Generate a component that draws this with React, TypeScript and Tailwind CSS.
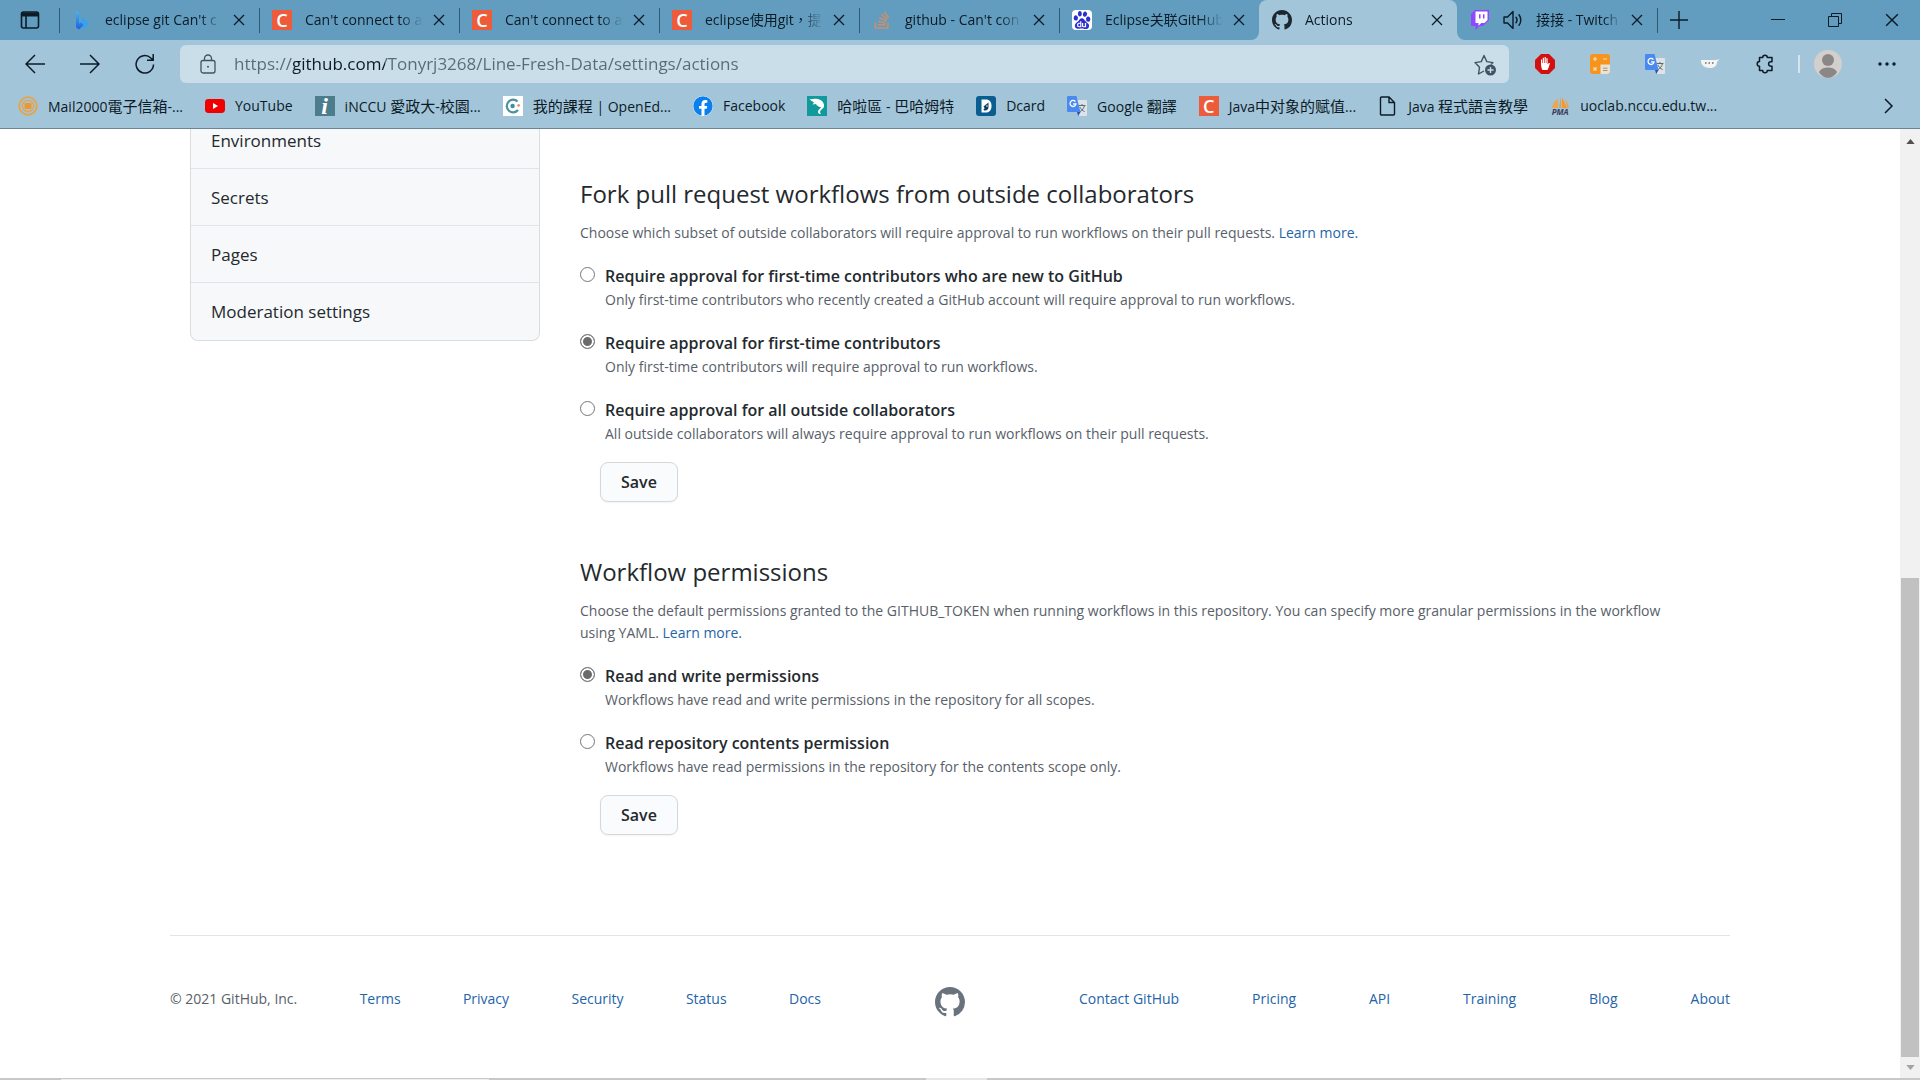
import { useState } from 'react';
import type { ReactNode } from 'react';
import { FaFacebook, FaStackOverflow } from 'react-icons/fa';
import { SiBaidu } from 'react-icons/si';

const GitHubMark = ({ className }: { className?: string }) => (
  <svg viewBox="0 0 16 16" fill="currentColor" className={className}>
    <path d="M8 0C3.58 0 0 3.58 0 8c0 3.54 2.29 6.53 5.47 7.59.4.07.55-.17.55-.38 0-.19-.01-.82-.01-1.49-2.01.37-2.53-.49-2.69-.94-.09-.23-.48-.94-.82-1.13-.28-.15-.68-.52-.01-.53.63-.01 1.08.58 1.23.82.72 1.21 1.87.87 2.33.66.07-.52.28-.87.51-1.07-1.78-.2-3.64-.89-3.64-3.95 0-.87.31-1.59.82-2.15-.08-.2-.36-1.02.08-2.12 0 0 .67-.21 2.2.82.64-.18 1.32-.27 2-.27.68 0 1.36.09 2 .27 1.53-1.04 2.2-.82 2.2-.82.44 1.1.16 1.92.08 2.12.51.56.82 1.27.82 2.15 0 3.07-1.87 3.75-3.65 3.95.29.25.54.73.54 1.48 0 1.07-.01 1.93-.01 2.2 0 .21.15.46.55.38A8.013 8.013 0 0016 8c0-4.42-3.58-8-8-8z" />
  </svg>
);

const BingIcon = () => (
  <svg viewBox="0 0 20 20" className="size-5">
    <defs>
      <linearGradient id="bing" x1="0" y1="0" x2="0" y2="1">
        <stop offset="0" stopColor="#46b4f5" />
        <stop offset="1" stopColor="#1b62dd" />
      </linearGradient>
    </defs>
    <path d="M4 1l3 1.6v11L9.500 12.400l2.500 3-5 4L4 17.500z" fill="url(#bing)" />
    <path d="M9 7l5.600 3.600c1.800 1.400 1.800 4 .2 5.600L7 19.500 12 14.600l-2-1.600z" fill="#35a2f3" />
  </svg>
);

const CsdnIcon = () => (
  <span className="flex size-5 items-center justify-center bg-[#ec5b3a] text-lg leading-5 font-semibold text-white">C</span>
);

const BaiduIcon = () => (
  <span className="flex size-5 items-center justify-center rounded-sm bg-white">
    <SiBaidu className="size-[18px] text-[#2a2fd0]" />
  </span>
);

const TwitchIcon = () => (
  <svg viewBox="0 0 20 20" className="size-5">
    <path d="M5 0L1 4v12h4.500v4l4-4h3.500l6-6V0z" fill="#9147ff" />
    <path d="M5.500 1.500h12V10l-3 3h-3.200l-2.800 2.800V13h-3z" fill="#fff" />
    <path d="M9 4.200h1.500v4.300H9zM13 4.200h1.500v4.300H13z" fill="#9147ff" />
  </svg>
);

const SpeakerIcon = () => (
  <svg viewBox="0 0 20 20" className="size-5" fill="none" stroke="currentColor" strokeWidth="1.4">
    <path d="M1 7h3.600L10 1.600v16.800L4.600 13H1z" strokeLinejoin="round" />
    <path d="M13 7.200c1.200 1.600 1.200 4 0 5.600M16 4.800c2.400 3 2.400 7.400 0 10.400" strokeLinecap="round" />
  </svg>
);

const CloseIcon = ({ className = 'size-3' }: { className?: string }) => (
  <svg viewBox="0 0 12 12" className={className} stroke="currentColor" strokeWidth="1.3">
    <path d="M1 1l10 10M11 1L1 11" />
  </svg>
);

const TranslateIcon = () => (
  <svg viewBox="0 0 20 20" className="size-5">
    <path d="M8 4h11a1 1 0 011 1v14a1 1 0 01-1 1h-7z" fill="#dfe3e6" />
    <path d="M11.500 9.500h7M15 8v1.500M17.500 9.500c-.6 2.800-2.400 5-5 6.500M12.800 11c1 2 2.600 3.600 4.800 4.600" stroke="#5a6b78" fill="none" />
    <path d="M1 0h8.500l4 16H1a1 1 0 01-1-1V1a1 1 0 011-1z" fill="#4a8af0" />
    <path d="M10 16h3.600l-2.400 4z" fill="#2c50b8" />
    <path d="M8.400 5.600A3 3 0 109 8H6.200" stroke="#fff" strokeWidth="1.3" fill="none" />
  </svg>
);

const Mail2000Icon = () => (
  <svg viewBox="0 0 20 20" className="size-5" fill="none" stroke="#e9a345">
    <circle cx="10" cy="10" r="8.800" strokeWidth="1.800" />
    <circle cx="10" cy="10" r="5.600" strokeWidth="1.400" />
    <rect x="6.500" y="7" width="7" height="6" rx="1" fill="#f0962e" stroke="none" />
  </svg>
);

const YouTubeIcon = () => (
  <svg viewBox="0 0 20 20" className="size-5">
    <rect y="3" width="20" height="14" rx="3.400" fill="#f00000" />
    <path d="M8 7l5 3-5 3z" fill="#fff" />
  </svg>
);

const InccuIcon = () => (
  <span className="flex size-5 items-center justify-center bg-[#4c7d8c] font-['Liberation_Serif',serif] text-2xl leading-5 font-bold text-white italic">i</span>
);

const OpenEduIcon = () => (
  <svg viewBox="0 0 20 20" className="size-5">
    <rect width="20" height="20" fill="#fff" />
    <path d="M14.600 5.600a6.300 6.300 0 10.400 8.400" fill="none" stroke="#4b93a3" strokeWidth="2.200" />
    <circle cx="9.600" cy="10" r="2.200" fill="#3f8fa0" />
    <circle cx="15.600" cy="9.400" r="1.300" fill="#ea8a6a" />
  </svg>
);

const BahamutIcon = () => (
  <svg viewBox="0 0 20 20" className="size-5">
    <rect width="20" height="20" fill="#109a9b" />
    <path d="M2.500 3.500C6 2.500 10 2 13.500 4c2.600 1.600 4 4 3.500 6.500-.4 1.800-2 2.300-3 3.500-1 1.300-1.500 3 .2 4-2.200.3-3.600-1-3.200-2.800.4-1.800 2.800-2.700 3-4.400C12.500 11.500 10 10 9 8L5.500 8.500 7 6.500z" fill="#fff" />
  </svg>
);

const DcardIcon = () => (
  <svg viewBox="0 0 20 20" className="size-5">
    <rect width="20" height="20" rx="3" fill="#0a5d8f" />
    <path d="M5.500 3.500h4.500c3.600 0 5.500 2.500 5.500 6.500s-2 6.500-5.500 6.500H5.500z" fill="#fff" />
    <path d="M7.500 10.500l5-4v4.500c0 2-1.500 3.500-3.200 3.500-1 0-1.800-.6-1.800-1.600 1.300.3 1.500-1 0-2.400z" fill="#0a3f63" />
    <circle cx="11" cy="10" r=".8" fill="#fff" />
  </svg>
);

const PageIcon = () => (
  <svg viewBox="0 0 20 20" className="size-5" fill="none" stroke="currentColor" strokeWidth="1.400">
    <path d="M3.500 1h7.500l5.500 5.500V18a1 1 0 01-1 1h-12a1 1 0 01-1-1V2a1 1 0 011-1zM11 1v5.500h5.500" />
  </svg>
);

const PmaIcon = () => (
  <span className="flex size-5 flex-col items-center">
    <svg viewBox="0 0 20 12" className="h-3 w-5 shrink-0">
      <path d="M9 12L11 0v12zM12 12V1l5 11z" fill="#f39a2d" />
      <path d="M2 12c1-5 3-8 6-9v9zM15 3c2 2.500 3.500 5 4 9H17z" fill="#eaa650" />
    </svg>
    <span className="text-[8px] leading-2 font-bold text-[#3b3b5c] italic">PMA</span>
  </span>
);

type Tab = { title: string; icon: ReactNode; sound?: boolean };

const tabsBefore: Tab[] = [
  { title: "eclipse git Can't c", icon: <BingIcon /> },
  { title: "Can't connect to a", icon: <CsdnIcon /> },
  { title: "Can't connect to a", icon: <CsdnIcon /> },
  { title: 'eclipse使用git，提', icon: <CsdnIcon /> },
  { title: "github - Can't con", icon: <FaStackOverflow className="size-5 text-[#c79070]" /> },
  { title: 'Eclipse关联GitHub', icon: <BaiduIcon /> },
];

const bookmarks = [
  { title: 'Mail2000電子信箱-...', icon: <Mail2000Icon /> },
  { title: 'YouTube', icon: <YouTubeIcon /> },
  { title: 'iNCCU 愛政大-校園...', icon: <InccuIcon /> },
  { title: '我的課程 | OpenEd...', icon: <OpenEduIcon /> },
  { title: 'Facebook', icon: <FaFacebook className="size-5 rounded-full bg-white text-[#0a80ee]" /> },
  { title: '哈啦區 - 巴哈姆特', icon: <BahamutIcon /> },
  { title: 'Dcard', icon: <DcardIcon /> },
  { title: 'Google 翻譯', icon: <TranslateIcon /> },
  { title: 'Java中对象的赋值...', icon: <CsdnIcon /> },
  { title: 'Java 程式語言教學', icon: <PageIcon /> },
  { title: 'uoclab.nccu.edu.tw...', icon: <PmaIcon /> },
];

const approvalOptions = [
  {
    id: 'new',
    label: 'Require approval for first-time contributors who are new to GitHub',
    note: 'Only first-time contributors who recently created a GitHub account will require approval to run workflows.',
  },
  {
    id: 'first',
    label: 'Require approval for first-time contributors',
    note: 'Only first-time contributors will require approval to run workflows.',
  },
  {
    id: 'all',
    label: 'Require approval for all outside collaborators',
    note: 'All outside collaborators will always require approval to run workflows on their pull requests.',
  },
];

const permissionOptions = [
  {
    id: 'write',
    label: 'Read and write permissions',
    note: 'Workflows have read and write permissions in the repository for all scopes.',
  },
  {
    id: 'read',
    label: 'Read repository contents permission',
    note: 'Workflows have read permissions in the repository for the contents scope only.',
  },
];

// Chinese glyphs are set one size up from the Latin text beside them
function MixedText({ text }: { text: string }) {
  return (
    <span className="whitespace-pre">
      {text.split(/([\u4e00-\u9fff]+)/).map((part, i) =>
        i % 2 ? <span key={i} className="text-[15px] leading-5">{part}</span> : part
      )}
    </span>
  );
}

function BrowserTab({ tab, active, divider }: { tab: Tab; active?: boolean; divider?: boolean }) {
  return (
    <div className={active ? 'flex h-10 w-[198px] items-center rounded-t-lg bg-[#a3c5da]' : 'flex h-10 w-[200px] items-center'}>
      <span className={divider ? 'h-[25px] w-px bg-[#2f5a74]' : 'w-px'} />
      <button className="ml-3 flex min-w-0 flex-1 items-center gap-[13px] text-left">
        <span className="shrink-0">{tab.icon}</span>
        {tab.sound && <span className="shrink-0"><SpeakerIcon /></span>}
        <span className="flex-1 overflow-hidden mask-r-from-80% mask-r-to-100% whitespace-nowrap">{tab.title}</span>
      </button>
      <button aria-label="Close tab" className="mr-3.5 ml-2.5">
        <CloseIcon />
      </button>
    </div>
  );
}

function TabStrip() {
  return (
    <div className="flex h-10">
      <div className="flex items-center rounded-br-lg bg-[#629dc0]">
        <button aria-label="Tab actions" className="flex w-[59px] justify-center">
          <svg viewBox="0 0 20 20" className="size-5" fill="none" stroke="currentColor" strokeWidth="1.6">
            <rect x="1.500" y="2" width="17" height="16" rx="2" />
            <path d="M1.500 4.500h17" strokeWidth="4" />
            <path d="M6 5v13" />
          </svg>
        </button>
        {tabsBefore.map((tab, i) => (
          <BrowserTab key={i} tab={tab} divider />
        ))}
      </div>
      <div className="bg-[linear-gradient(#629dc0_50%,#a3c5da_50%)]">
        <BrowserTab tab={{ title: 'Actions', icon: <GitHubMark className="size-5 text-[#1c2830]" /> }} active />
      </div>
      <div className="flex flex-1 items-center rounded-bl-lg bg-[#629dc0]">
        <BrowserTab tab={{ title: '接接 - Twitch', icon: <TwitchIcon />, sound: true }} />
        <span className="h-[25px] w-px bg-[#2f5a74]" />
        <button aria-label="New tab" className="px-3">
          <svg viewBox="0 0 18 18" className="size-[18px]" stroke="currentColor" strokeWidth="1.400">
            <path d="M9 0v18M0 9h18" />
          </svg>
        </button>
        <div className="ml-auto flex">
          <button aria-label="Minimize" className="flex w-[57px] justify-center">
            <svg viewBox="0 0 14 14" className="size-3.5" stroke="currentColor"><path d="M0 6.500h14" /></svg>
          </button>
          <button aria-label="Restore" className="flex w-[57px] justify-center">
            <svg viewBox="0 0 14 14" className="size-3.5" stroke="currentColor" fill="none">
              <path d="M.5 3.500h10v10H.5zM3.500 3.500v-3h10v10h-3" />
            </svg>
          </button>
          <button aria-label="Close" className="flex w-[57px] justify-center">
            <CloseIcon className="size-3.5" />
          </button>
        </div>
      </div>
    </div>
  );
}

function Toolbar() {
  return (
    <div className="flex h-12 items-center pr-6">
      <button aria-label="Back" className="flex w-[55px] justify-end pr-2.5">
        <svg viewBox="0 0 20 20" className="size-5 shrink-0" fill="none" stroke="currentColor" strokeWidth="1.500"><path d="M20 10H1M10 1L1 10l9 9" /></svg>
      </button>
      <button aria-label="Forward" className="flex w-[55px] justify-end pr-2.5">
        <svg viewBox="0 0 20 20" className="size-5 shrink-0" fill="none" stroke="currentColor" strokeWidth="1.500"><path d="M0 10h19M10 1l9 9-9 9" /></svg>
      </button>
      <button aria-label="Refresh" className="flex w-[70px] justify-center">
        <svg viewBox="0 0 20 20" className="size-5" fill="none" stroke="currentColor" strokeWidth="1.500">
          <path d="M18.500 10.500A8.700 8.700 0 1115.800 4L18 6M18.200 0v6.300H12" />
        </svg>
      </button>
      <div className="flex h-[38px] flex-1 items-center gap-4 rounded-md bg-[#c9dee9] pr-3 pl-5 text-[#3f5563]">
        <svg viewBox="0 0 16 20" className="h-5 w-4 shrink-0" fill="none" stroke="currentColor" strokeWidth="1.300">
          <rect x="1" y="6.500" width="14" height="12.500" rx="2" />
          <path d="M4.500 6.500V4.500a3.500 3.500 0 017 0v2" />
          <circle cx="8" cy="12.700" r="1" fill="currentColor" stroke="none" />
        </svg>
        {/* the gradient stops darken the host name only */}
        <input
          aria-label="Address"
          defaultValue="https://github.com/Tonyrj3268/Line-Fresh-Data/settings/actions"
          className="flex-1 bg-[linear-gradient(90deg,#566a77_61px,#0b1a24_61px,#0b1a24_153px,#566a77_153px)] bg-clip-text pl-0.5 text-[17px] text-transparent outline-none"
        />
        <button aria-label="Add to favorites">
          <svg viewBox="0 0 24 24" className="size-6" fill="none" stroke="currentColor" strokeWidth="1.400">
            <path d="M11 19l-5.500 3 1-6.700L2 10.600l6.300-1L11 3.500l2.800 6.100 6.200 1-2 2" strokeLinejoin="round" />
            <circle cx="17.500" cy="18" r="5.500" fill="#3f5563" stroke="none" />
            <path d="M17.500 15v6M14.500 18h6" stroke="#c9dee9" />
          </svg>
        </button>
      </div>
      <div className="ml-2 flex items-center">
        <button aria-label="Ad blocker" className="flex w-[55px] justify-center">
          <svg viewBox="0 0 20 20" className="size-5">
            <path d="M6 0h8l6 6v8l-6 6H6l-6-6V6z" fill="#d2100f" />
            <path d="M6 9V5.500h1.200V9h.6V3.800H9V9h.6V3h1.200v6h.6V4.200h1.200v6.300l1.200-1.500h1.200c-.6 2-1.400 5.500-2.600 7H7.600C6.400 14.500 6 12 6 9z" fill="#fff" />
          </svg>
        </button>
        <button aria-label="Calculator" className="flex w-[55px] justify-center">
          <svg viewBox="0 0 20 20" className="size-5">
            <rect width="20" height="20" rx="3" fill="#f7941e" />
            <path d="M10.500 10.500H20V17a3 3 0 01-3 3h-6.500z" fill="#e6e2dc" />
            <path d="M3 5h4M5 3v4M13 5h4M3.500 13.500l3 3M6.500 13.500l-3 3" stroke="#ffe3b8" strokeWidth="1.200" />
            <path d="M13 14.200h4.500M13 16.500h4.500" stroke="#c98c45" />
          </svg>
        </button>
        <button aria-label="Translate" className="flex w-[55px] justify-center"><TranslateIcon /></button>
        <button aria-label="Extension" className="flex w-[55px] justify-center">
          <svg viewBox="0 0 20 20" className="size-5">
            <path d="M1 6h15l3.500-1-2.500 3c0 4-3 6-7.500 6S.5 11 1 6z" fill="#f4f4f2" />
            <path d="M5 9h1.500M8.500 9H10M12 9h1.500" stroke="#6b6b6b" strokeWidth="1.400" />
          </svg>
        </button>
        <button aria-label="Extensions" className="flex w-[55px] justify-center">
          <svg viewBox="0 0 20 20" className="size-5" fill="none" stroke="currentColor" strokeWidth="1.500" strokeLinejoin="round">
            <path d="M4.500 3.500h3.200a2.300 2.300 0 014.600 0h4.700v4.300h-1.200a2.200 2.200 0 000 4.400H17v4.300h-4.700a2.300 2.300 0 01-4.600 0H4.500v-4.300a2.300 2.300 0 010-4.600z" />
          </svg>
        </button>
        <span className="mx-1.5 h-[18px] w-0.5 bg-[#d5e4ee]" />
        <button aria-label="Profile" className="ml-2">
          <svg viewBox="0 0 28 28" className="size-7">
            <circle cx="14" cy="14" r="14" fill="#d3cfcc" />
            <circle cx="14" cy="10" r="6" fill="#8b8785" />
            <path d="M5 22c1.500-3.200 5-4.500 9-4.500s7.500 1.300 9 4.500c-2 3.500-5.400 5.800-9 5.800S7 25.500 5 22z" fill="#8b8785" />
          </svg>
        </button>
        <button aria-label="Settings and more" className="ml-9">
          <svg viewBox="0 0 18 4" className="h-1 w-[18px]" fill="currentColor">
            <circle cx="2" cy="2" r="1.700" /><circle cx="9" cy="2" r="1.700" /><circle cx="16" cy="2" r="1.700" />
          </svg>
        </button>
      </div>
    </div>
  );
}

function BookmarksBar() {
  return (
    <nav className="flex h-[41px] items-center border-b border-[#6b8597] pr-[26px] pb-1 pl-[18px]">
      <ul className="flex flex-1 items-center gap-[22px]">
        {bookmarks.map((b) => (
          <li key={b.title}>
            <a href="#" className="flex items-center gap-2.5">
              {b.icon}
              <MixedText text={b.title} />
            </a>
          </li>
        ))}
      </ul>
      <button aria-label="More favorites">
        <svg viewBox="0 0 10 16" className="h-4 w-2.5" fill="none" stroke="currentColor" strokeWidth="1.500"><path d="M1 1l7 7-7 7" /></svg>
      </button>
    </nav>
  );
}

type Option = { id: string; label: string; note: string };

function RadioList({ name, options, initial }: { name: string; options: Option[]; initial: string }) {
  const [value, setValue] = useState(initial);

  return (
    <form onSubmit={(e) => e.preventDefault()}>
      <div className="space-y-[19px]">
        {options.map((o) => (
          <div key={o.id} className="flex gap-2.5">
            <input
              type="radio"
              id={`${name}-${o.id}`}
              name={name}
              checked={value === o.id}
              onChange={() => setValue(o.id)}
              className="mt-1 size-[15px] shrink-0 appearance-none rounded-full border border-[#767676] bg-white checked:bg-[#6b6b6b] checked:shadow-[inset_0_0_0_2px_#fff]"
            />
            <div>
              <label htmlFor={`${name}-${o.id}`} className="block text-base leading-[26px] font-semibold text-[#24292e]">{o.label}</label>
              <p className="text-sm leading-[22px] text-[#586069]">{o.note}</p>
            </div>
          </div>
        ))}
      </div>
      <button type="submit" className="mt-[17px] ml-5 h-10 rounded-lg border border-[#d5d8da] bg-[#fafbfc] px-5 text-base font-semibold text-[#24292e] shadow-xs">
        Save
      </button>
    </form>
  );
}

function FooterLink({ children }: { children: ReactNode }) {
  return <li><a href="#" className="text-[#2464a8] hover:underline">{children}</a></li>;
}

function Scrollbar() {
  return (
    <div className="flex w-5 shrink-0 flex-col items-center bg-[#f1f1f1]">
      <svg viewBox="0 0 10 6" className="my-2.5 h-[5px] w-[9px] shrink-0"><path d="M0 6l5-6 5 6z" fill="#505050" /></svg>
      <div className="flex w-full flex-1 flex-col justify-end">
        <div className="mx-px h-[53%] bg-[#c1c1c1]" />
      </div>
      <svg viewBox="0 0 10 6" className="my-2 h-[5px] w-[9px] shrink-0"><path d="M0 0l5 6 5-6z" fill="#a3a3a3" /></svg>
    </div>
  );
}

export default function App() {
  return (
    <div className="flex h-screen flex-col bg-white font-['Open_Sans','Noto_Sans_CJK_TC',sans-serif]">
      <header className="shrink-0 bg-[#a3c5da] text-sm text-[#0c1b26]">
        <TabStrip />
        <Toolbar />
        <BookmarksBar />
      </header>

      <div className="flex min-h-0 flex-1">
        <div className="min-w-0 flex-1 overflow-hidden">
          <div className="mx-auto flex max-w-[1520px] items-start gap-10">
            <nav className="w-[350px] shrink-0 divide-y divide-[#e1e4e8] overflow-hidden rounded-b-lg border border-t-0 border-[#d9dce0] bg-[#f6f8fa] text-[17px] text-[#24292e]">
              <a href="#" className="block h-10 px-5 leading-6">Environments</a>
              <a href="#" className="block h-[57px] px-5 leading-[57px]">Secrets</a>
              <a href="#" className="block h-[57px] px-5 leading-[57px]">Pages</a>
              <a href="#" className="block h-[57px] px-5 leading-[57px]">Moderation settings</a>
            </nav>

            <main className="min-w-0 flex-1 pr-5">
              <section className="pt-12">
                <h2 className="text-2xl leading-[34px] text-[#24292e]">Fork pull request workflows from outside collaborators</h2>
                <p className="mt-[11px] mb-[19px] text-sm leading-[22px] text-[#586069]">
                  Choose which subset of outside collaborators will require approval to run workflows on their pull requests.{' '}
                  <a href="#" className="text-[#2464a8]">Learn more.</a>
                </p>
                <RadioList name="approval" options={approvalOptions} initial="first" />
              </section>

              <section className="pt-[53px]">
                <h2 className="text-2xl leading-[34px] text-[#24292e]">Workflow permissions</h2>
                <p className="mt-[11px] mb-[19px] text-sm leading-[22px] text-[#586069]">
                  Choose the default permissions granted to the GITHUB_TOKEN when running workflows in this repository. You can specify more granular permissions in the workflow using YAML.{' '}
                  <a href="#" className="text-[#2464a8]">Learn more.</a>
                </p>
                <RadioList name="permissions" options={permissionOptions} initial="write" />
              </section>
            </main>
          </div>

          <footer className="mx-auto mt-[100px] flex max-w-[1560px] items-start justify-between border-t border-[#e1e4e8] pt-[51px] text-sm leading-6 text-[#586069]">
            <ul className="flex w-[651px] justify-between">
              <li>© 2021 GitHub, Inc.</li>
              <FooterLink>Terms</FooterLink>
              <FooterLink>Privacy</FooterLink>
              <FooterLink>Security</FooterLink>
              <FooterLink>Status</FooterLink>
              <FooterLink>Docs</FooterLink>
            </ul>
            <a href="#" aria-label="GitHub" className="text-[#6a737d]"><GitHubMark className="size-[30px]" /></a>
            <ul className="flex w-[651px] justify-between">
              <FooterLink>Contact GitHub</FooterLink>
              <FooterLink>Pricing</FooterLink>
              <FooterLink>API</FooterLink>
              <FooterLink>Training</FooterLink>
              <FooterLink>Blog</FooterLink>
              <FooterLink>About</FooterLink>
            </ul>
          </footer>
        </div>
        <Scrollbar />
      </div>

      <div className="flex h-0.5 shrink-0 bg-[#c8c8c8]">
        <span className="ml-[61px] w-[428px] border-b border-[#eeeeee]" />
        <span className="ml-[437px] w-[61px] bg-[#e6e6e6]" />
      </div>
    </div>
  );
}
